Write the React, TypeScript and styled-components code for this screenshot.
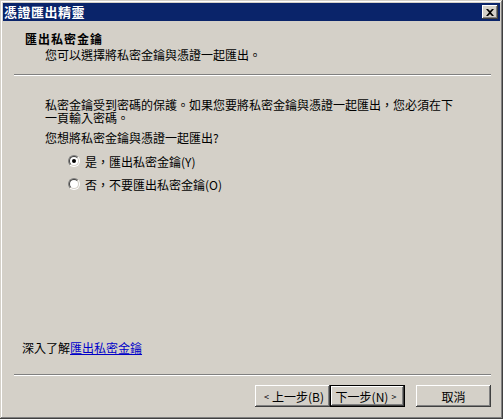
import React from "react";
import styled, { createGlobalStyle } from "styled-components";

const Global = createGlobalStyle`
  html, body { margin: 0; padding: 0; background: #D4D0C8; }
  body { font-family: "Noto Sans CJK TC", "Liberation Sans", sans-serif; font-size: 12px; color: #000; }
  * { box-sizing: border-box; }
`;

const Window = styled.div`
  width: 503px;
  height: 419px;
  background: #D4D0C8;
  padding: 3px;
  display: flex;
  flex-direction: column;
  box-shadow: inset -1px -1px #404040, inset 1px 1px #D4D0C8,
    inset -2px -2px #808080, inset 2px 2px #ffffff;
`;

const TitleBar = styled.div`
  height: 18px;
  flex: none;
  background: #0A246A;
  display: flex;
  align-items: center;
  justify-content: space-between;
  padding: 0 2px 0 1px;
`;

const TitleText = styled.span`
  color: #fff;
  font-weight: bold;
  font-size: 13px;
  line-height: 14px;
  letter-spacing: 0.5px;
`;

const CloseButton = styled.div`
  width: 16px;
  height: 14px;
  background: #D4D0C8;
  display: flex;
  align-items: center;
  justify-content: center;
  box-shadow: inset -1px -1px #404040, inset 1px 1px #ffffff,
    inset -2px -2px #808080;
`;

const Header = styled.div`
  padding: 11px 0 0 22px;
  flex: none;
`;

const HeaderTitle = styled.div`
  font-weight: bold;
  line-height: 14px;
  letter-spacing: 1px;
`;

const HeaderSub = styled.div`
  padding-left: 20px;
  margin-top: 2px;
  line-height: 14px;
`;

const Separator = styled.div<{ $top: number }>`
  flex: none;
  height: 2px;
  margin: ${(p) => p.$top}px 9px 0 11px;
  border-top: 1px solid #808080;
  border-bottom: 1px solid #ffffff;
`;

const Body = styled.div`
  flex: 1;
  padding: 22px 0 0 42px;
  display: flex;
  flex-direction: column;
`;

const Paragraph = styled.div`
  line-height: 13px;
`;

const Question = styled.div`
  line-height: 13px;
  margin-top: 7px;
`;

const Options = styled.div`
  display: flex;
  flex-direction: column;
  gap: 11px;
  margin-top: 11px;
  padding-left: 23px;
`;

const OptionRow = styled.label`
  display: flex;
  align-items: center;
  gap: 5px;
  height: 12px;
  line-height: 13px;
`;

const RadioOuter = styled.span`
  width: 12px;
  height: 12px;
  border-radius: 50%;
  border: 1px solid;
  border-color: #808080 #ffffff #ffffff #808080;
  display: flex;
`;

const RadioInner = styled.span`
  flex: 1;
  border-radius: 50%;
  border: 1px solid;
  border-color: #404040 #D4D0C8 #D4D0C8 #404040;
  background: #fff;
  display: flex;
  align-items: center;
  justify-content: center;
`;

const RadioDot = styled.span<{ $on: boolean }>`
  width: 4px;
  height: 4px;
  border-radius: 50%;
  background: ${(p) => (p.$on ? "#000" : "transparent")};
`;

const LearnMore = styled.div`
  flex: none;
  padding-left: 19px;
  line-height: 13px;
`;

const Link = styled.a`
  color: #0000C8;
  text-decoration: underline;
`;

const ButtonRow = styled.div`
  flex: none;
  display: flex;
  justify-content: flex-end;
  align-items: center;
  margin: 9px 9px 9px 0;
`;

const Button = styled.div<{ $default?: boolean; $gap?: number }>`
  width: 75px;
  height: 22px;
  margin-left: ${(p) => p.$gap ?? 0}px;
  display: flex;
  align-items: center;
  justify-content: center;
  line-height: 13px;
  background: #D4D0C8;
  box-shadow: ${(p) =>
    p.$default
      ? "inset 0 0 0 1px #000, inset -2px -2px #404040, inset 2px 2px #ffffff, inset -3px -3px #808080"
      : "inset -1px -1px #404040, inset 1px 1px #ffffff, inset -2px -2px #808080"};
`;

const Chevron = styled.span`
  font-size: 9px;
  margin: 0 3px;
`;

function Radio({ on, label }: { on: boolean; label: string }) {
  return (
    <OptionRow>
      <RadioOuter>
        <RadioInner>
          <RadioDot $on={on} />
        </RadioInner>
      </RadioOuter>
      <span>{label}</span>
    </OptionRow>
  );
}

export default function App() {
  return (
    <>
      <Global />
      <Window>
        <TitleBar>
          <TitleText>憑證匯出精靈</TitleText>
          <CloseButton>
            <svg width="8" height="7" viewBox="0 0 8 7">
              <path d="M0 0h2l2 2 2-2h2L5 3.5 8 7H6L4 5 2 7H0l3-3.5z" fill="#000" />
            </svg>
          </CloseButton>
        </TitleBar>
        <Header>
          <HeaderTitle>匯出私密金鑰</HeaderTitle>
          <HeaderSub>您可以選擇將私密金鑰與憑證一起匯出。</HeaderSub>
        </Header>
        <Separator $top={12} />
        <Body>
          <Paragraph>
            私密金鑰受到密碼的保護。如果您要將私密金鑰與憑證一起匯出，您必須在下
            <br />
            一頁輸入密碼。
          </Paragraph>
          <Question>您想將私密金鑰與憑證一起匯出?</Question>
          <Options>
            <Radio on={true} label="是，匯出私密金鑰(Y)" />
            <Radio on={false} label="否，不要匯出私密金鑰(O)" />
          </Options>
        </Body>
        <LearnMore>
          深入了解<Link href="#">匯出私密金鑰</Link>
        </LearnMore>
        <Separator $top={20} />
        <ButtonRow>
          <Button>
            <Chevron>&lt;</Chevron>上一步(B)
          </Button>
          <Button $default>
            下一步(N)<Chevron>&gt;</Chevron>
          </Button>
          <Button $gap={11}>取消</Button>
        </ButtonRow>
      </Window>
    </>
  );
}
